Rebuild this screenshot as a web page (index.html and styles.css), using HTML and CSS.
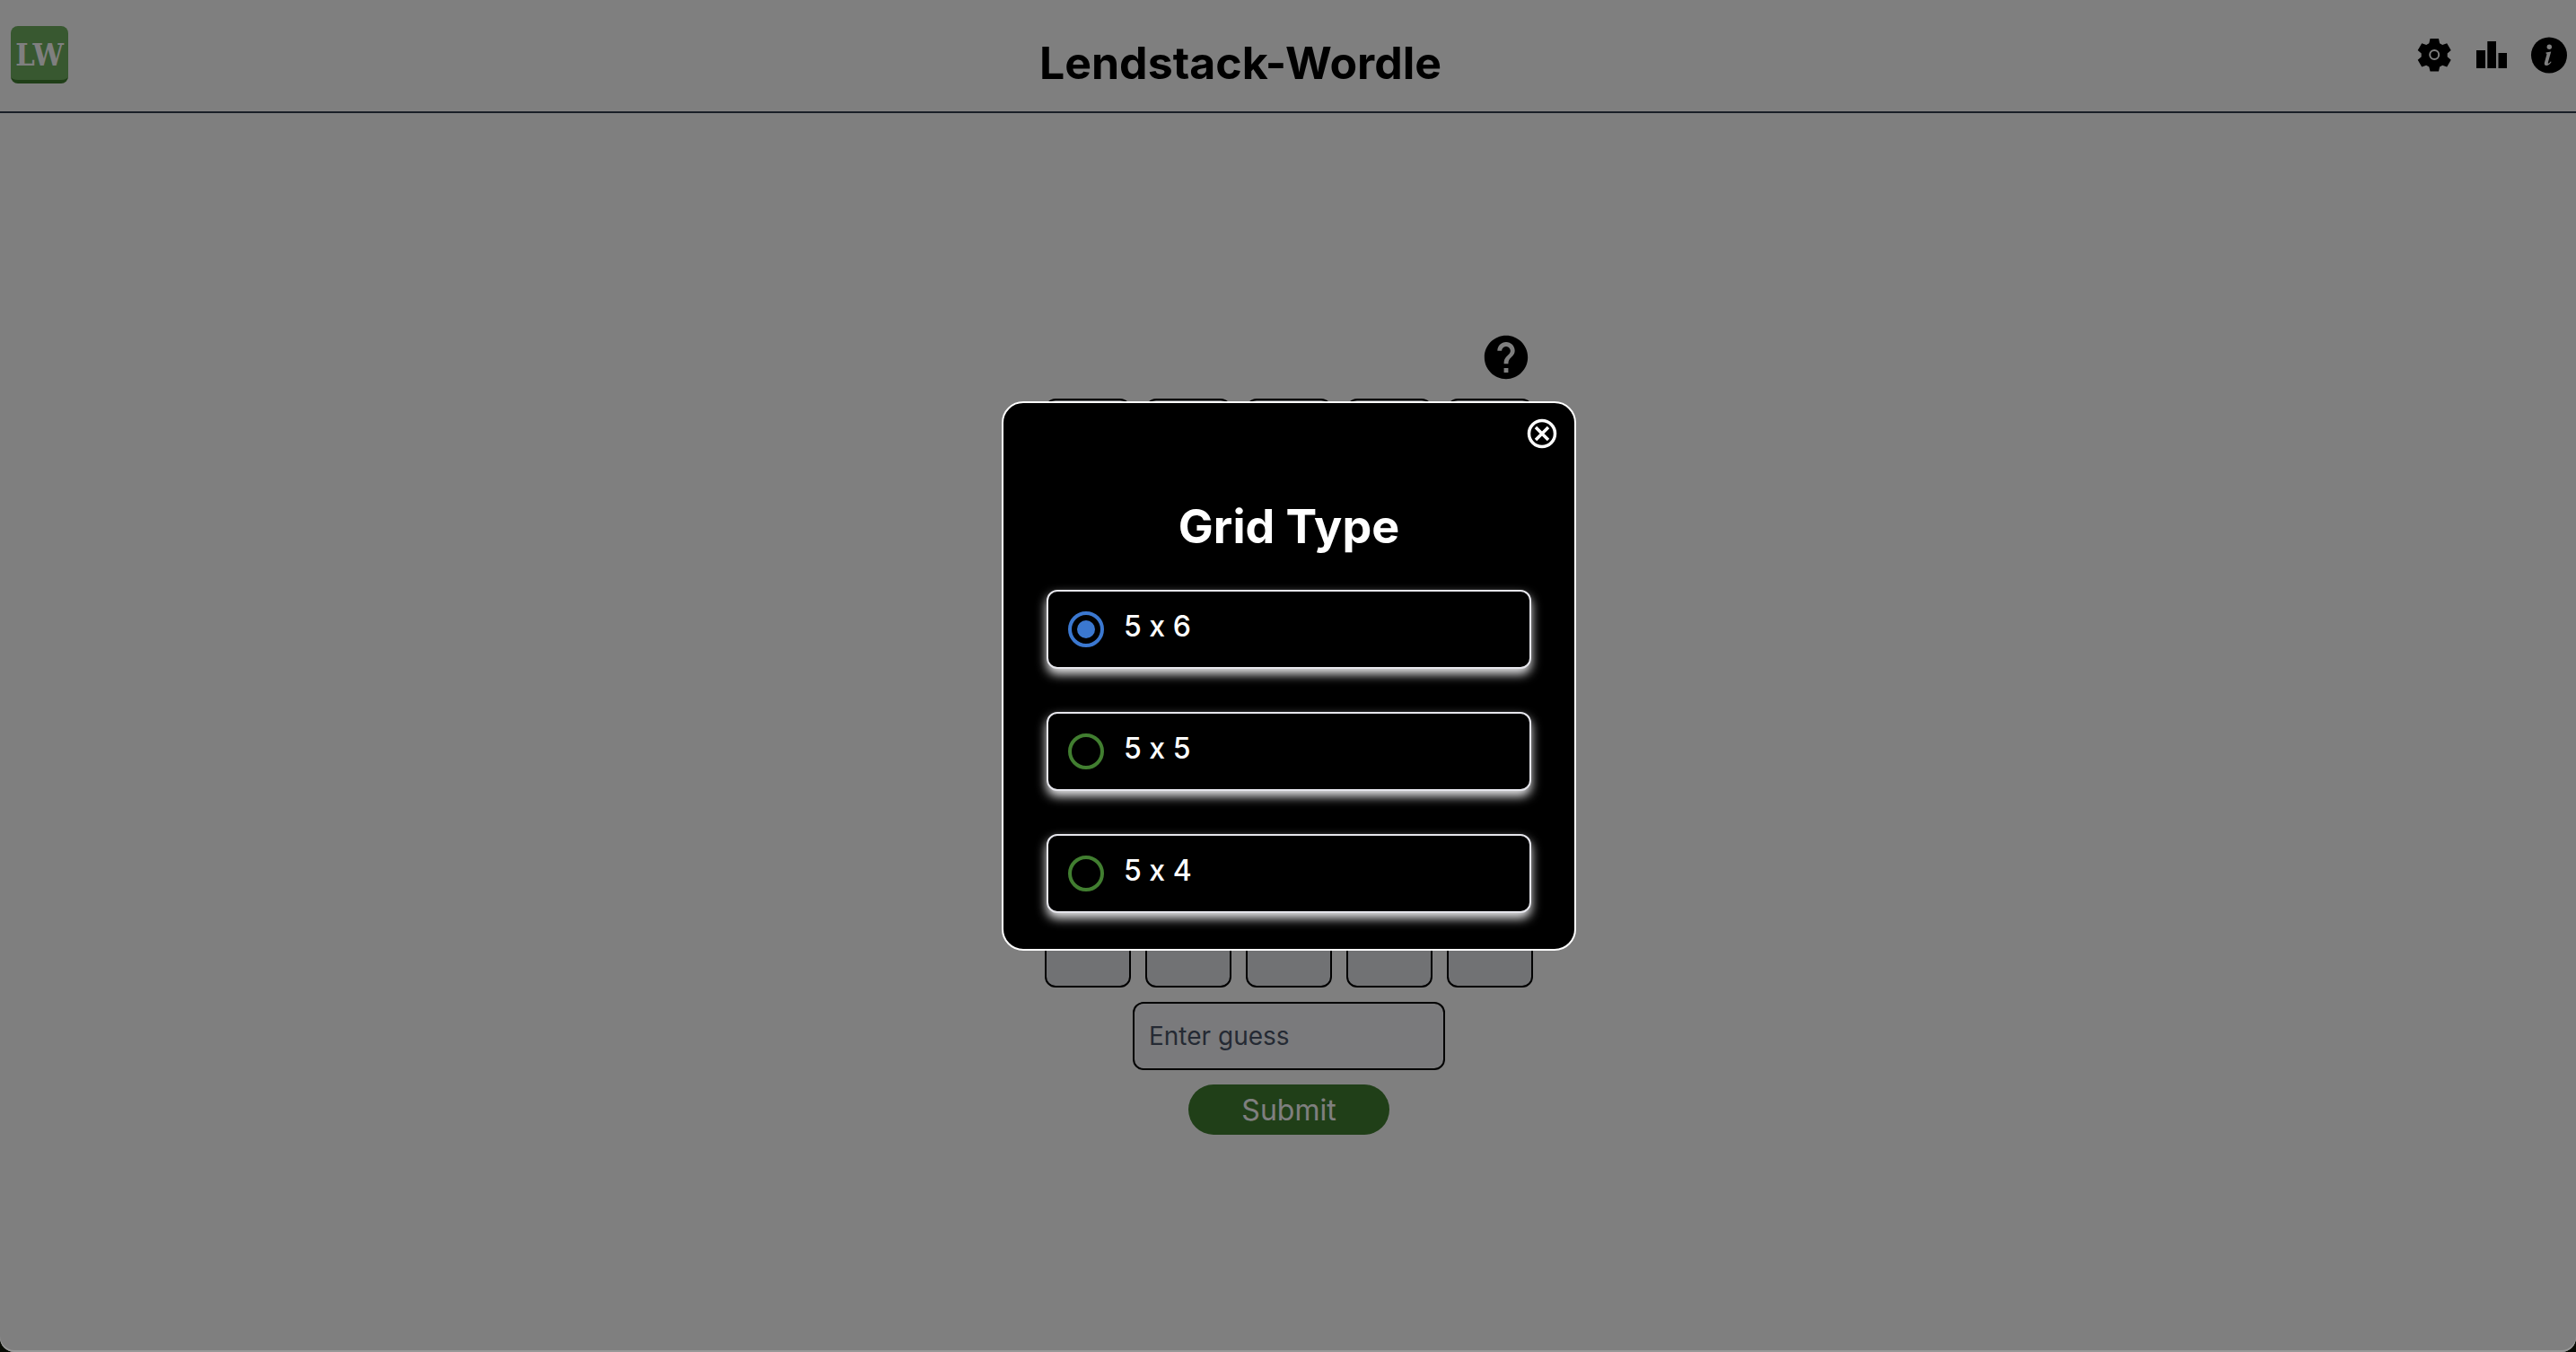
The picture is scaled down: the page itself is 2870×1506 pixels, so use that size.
FILE: index.html
```html
<!DOCTYPE html>
<html lang="en">
<head>
<meta charset="utf-8">
<title>Lendstack-Wordle</title>
<meta name="viewport" content="width=device-width, initial-scale=1">
<link rel="stylesheet" href="styles.css">
</head>
<body>
<div class="page">
  <header class="topbar">
    <a class="logo" href="#" aria-label="Home">LW</a>
    <h1 class="topbar-title">Lendstack-Wordle</h1>
    <nav class="topbar-actions" aria-label="Game">
      <button class="icon-button" type="button" aria-label="Settings">
        <svg class="icon" viewBox="0 0 48 48" aria-hidden="true">
          <path fill-rule="evenodd" d="M19.500 6h9.500l1.100 5.200 3.100 1.800 5-1.700 4.500 7.800-4 3.500v3.600l4 3.500-4.500 7.800-5-1.700-3.100 1.800-1.100 4.900h-9.500l-1.200-4.900-3.100-1.800-5 1.700-4.500-7.800 4-3.500v-3.600l-4-3.500 4.500-7.800 5 1.700 3.100-1.800zM24.200 18a6 6 0 1 0 0 12 6 6 0 0 0 0-12z"/>
          <circle cx="24.200" cy="24" r="4"/>
        </svg>
      </button>
      <button class="icon-button" type="button" aria-label="Statistics">
        <svg class="icon" viewBox="0 0 48 48" aria-hidden="true">
          <path d="M7 19h10v20H7zM19.300 9h9.700v30h-9.700zM31.500 22h9.500v17h-9.500z"/>
        </svg>
      </button>
      <button class="icon-button" type="button" aria-label="About">
        <svg class="icon" viewBox="0 0 48 48" aria-hidden="true">
          <circle cx="24" cy="24.500" r="20"/>
          <circle class="icon-cut" cx="24.300" cy="15.200" r="2.700"/>
          <path class="icon-cut" d="M20.500 21.500l5.700-1-3.400 12.200c-.2.900.1 1.200.8.800.8-.4 1.500-1.200 2.200-2.100l.8.600c-1.700 2.700-3.700 4.100-5.500 4.100-1.900 0-2.700-1.300-2.200-3.300l2.400-8.900c.3-1-.1-1.300-1-1.400z"/>
        </svg>
      </button>
    </nav>
  </header>

  <main class="game">
    <div class="board">
      <button class="help-button" type="button" aria-label="How to play">
        <svg class="help-icon" viewBox="0 0 24 24" aria-hidden="true">
          <path d="M12 2C6.480 2 2 6.480 2 12s4.480 10 10 10 10-4.480 10-10S17.520 2 12 2zm1 17h-2v-2h2v2zm2.070-7.750l-.9.920C13.450 12.900 13 13.500 13 15h-2v-.5c0-1.100.45-2.100 1.170-2.830l1.240-1.260c.37-.36.590-.86.590-1.410 0-1.100-.9-2-2-2s-2 .9-2 2H8c0-2.210 1.790-4 4-4s4 1.790 4 4c0 .88-.36 1.680-.93 2.250z"/>
        </svg>
      </button>
      <div class="tiles">
        <span class="tile"></span><span class="tile"></span><span class="tile"></span><span class="tile"></span><span class="tile"></span>
        <span class="tile"></span><span class="tile"></span><span class="tile"></span><span class="tile"></span><span class="tile"></span>
        <span class="tile"></span><span class="tile"></span><span class="tile"></span><span class="tile"></span><span class="tile"></span>
        <span class="tile"></span><span class="tile"></span><span class="tile"></span><span class="tile"></span><span class="tile"></span>
        <span class="tile"></span><span class="tile"></span><span class="tile"></span><span class="tile"></span><span class="tile"></span>
        <span class="tile"></span><span class="tile"></span><span class="tile"></span><span class="tile"></span><span class="tile"></span>
      </div>
    </div>
    <form class="guess-form">
      <input class="guess-input" type="text" placeholder="Enter guess" aria-label="Enter guess">
      <button class="submit-button" type="submit">Submit</button>
    </form>
  </main>
</div>

<div class="overlay">
  <section class="dialog" role="dialog" aria-modal="true" aria-labelledby="dialog-title">
    <button class="close-button" type="button" aria-label="Close">
      <svg class="close-icon" viewBox="0 0 40 40" aria-hidden="true">
        <circle cx="20" cy="20" r="14.500"/>
        <path d="M13 13l14 14M27 13L13 27"/>
      </svg>
    </button>
    <h2 class="dialog-title" id="dialog-title">Grid Type</h2>
    <div class="options">
      <label class="option"><input class="option-radio" type="radio" name="grid" value="6" checked><span class="option-text">5 x 6</span></label>
      <label class="option"><input class="option-radio" type="radio" name="grid" value="5"><span class="option-text">5 x 5</span></label>
      <label class="option"><input class="option-radio" type="radio" name="grid" value="4"><span class="option-text">5 x 4</span></label>
    </div>
  </section>
</div>
</body>
</html>
```
FILE: styles.css
```css
* {
  box-sizing: border-box;
}

html {
  background: #080b04;
}

body {
  margin: 0;
  min-height: 100vh;
  display: grid;
  font-family: Inter, "Liberation Sans", sans-serif;
  font-size: 32px;
  font-variant-ligatures: no-contextual;
  color: #000;
}

button {
  padding: 0;
  border: 0;
  background: none;
  font: inherit;
  color: inherit;
  cursor: pointer;
}

/* The page and the overlay share one grid cell, so the overlay covers it. */
.page,
.overlay {
  grid-area: 1 / 1;
  min-width: 0;
  border-radius: 0 0 16px 16px;
}

.page {
  display: flex;
  flex-direction: column;
  background: #fff;
}

.topbar {
  display: flex;
  align-items: center;
  justify-content: space-between;
  height: 126px;
  padding: 0 6px 2px 12px;
  border-bottom: 2px solid #343e50;
}

.logo {
  display: flex;
  align-items: center;
  justify-content: center;
  width: 64px;
  height: 64px;
  padding-top: 4px;
  border-radius: 8px;
  border-bottom: 4px solid #417e30;
  background: #70b060;
  color: #fff;
  font: bold 34px/1 "DejaVu Serif Condensed", "DejaVu Serif", serif;
  text-decoration: none;
}

.topbar-title {
  margin: 0;
  padding-top: 18px;
  font-size: 50px;
  line-height: 64px;
  font-weight: 700;
}

.topbar-actions {
  display: flex;
  gap: 16px;
}

.icon-button,
.icon {
  display: block;
  width: 48px;
  height: 48px;
}

.icon-cut {
  fill: #fff;
}

.game {
  display: flex;
  flex-direction: column;
  align-items: center;
  gap: 16px;
  padding: 242px 0 0 2px;
}

.board {
  display: flex;
  flex-direction: column;
  align-items: flex-end;
  gap: 16px;
}

.help-button {
  display: grid;
  place-items: center;
  width: 60px;
  height: 60px;
}

.help-icon {
  display: block;
  width: 58px;
  height: 58px;
}

.tiles {
  display: grid;
  grid-template-columns: repeat(5, 96px);
  grid-auto-rows: 96px;
  gap: 16px;
}

.tile {
  border: 2px solid #000;
  border-radius: 12px;
  background: #e2e4e8;
}

.guess-form {
  display: flex;
  flex-direction: column;
  align-items: center;
  gap: 16px;
}

.guess-input {
  width: 348px;
  height: 76px;
  padding: 0 16px;
  border: 2px solid #000;
  border-radius: 12px;
  background: #f5f5f8;
  font: inherit;
  font-size: 28px;
}

.guess-input::placeholder {
  color: #4a5568;
  opacity: 1;
}

.submit-button {
  width: 224px;
  height: 56px;
  border-radius: 28px;
  background: #417e30;
  color: #fff;
}

.overlay {
  position: relative;
  display: flex;
  align-items: center;
  justify-content: center;
  padding-left: 2px;
  background: rgba(0, 0, 0, 0.5);
  box-shadow: inset 0 -2px 0 rgba(255, 255, 255, 0.2);
}

.dialog {
  display: flex;
  flex-direction: column;
  width: 640px;
  padding: 14px 48px 40px;
  border: 2px solid #fff;
  border-radius: 24px;
  background: #000;
  color: #fff;
}

.close-button {
  align-self: flex-end;
  margin-right: -32px;
}

.close-icon {
  display: block;
  width: 40px;
  height: 40px;
  fill: none;
  stroke: #fff;
  stroke-width: 3.5;
}

.dialog-title {
  margin: 52px 0 38px;
  font-size: 52px;
  line-height: 64px;
  font-weight: 700;
  text-align: center;
}

.options {
  display: flex;
  flex-direction: column;
  gap: 48px;
}

.option {
  display: flex;
  align-items: center;
  gap: 22px;
  height: 88px;
  padding: 0 22px;
  border: 2px solid #e6e6ec;
  border-radius: 12px;
  box-shadow: 0 6px 12px #e8e8ea;
  background: #000;
}

.option-radio {
  appearance: none;
  display: grid;
  place-items: center;
  width: 40px;
  height: 40px;
  margin: 0;
  border: 4px solid #417e30;
  border-radius: 50%;
}

.option-radio:checked {
  border-color: #3b78d0;
}

.option-radio:checked::before {
  content: "";
  width: 20px;
  height: 20px;
  border-radius: 50%;
  background: #3b78d0;
}

.option-text {
  padding-bottom: 6px;
  line-height: 32px;
  font-weight: 500;
}
```
